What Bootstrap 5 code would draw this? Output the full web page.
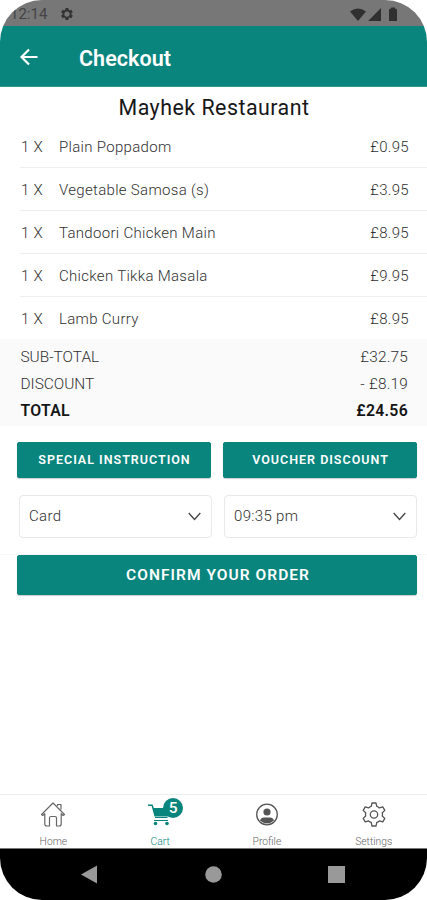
<!DOCTYPE html>
<html lang="en">
<head>
<meta charset="utf-8">
<meta name="viewport" content="width=device-width, initial-scale=1">
<title>Checkout</title>
<link href="https://cdn.jsdelivr.net/npm/bootstrap@5.3.0/dist/css/bootstrap.min.css" rel="stylesheet">
<style>
:root{--teal:#0a857e}
body{font-family:Roboto,"Noto Sans",sans-serif;background:#fff;color:#303030;font-size:15px;line-height:20px}
.phone{width:427px;height:900px;border-radius:42px;background:#fff}
.status{height:26px;background:#777;color:#444;font-size:15px;padding:2px 29px 0 10px}
.status .gear{margin:0 0 1px 13px}
.appbar{height:61px;background:var(--teal);padding:2px 0 0 20px;border-bottom:1px solid #2f9791}
.appbar h1{font-size:21.5px;font-weight:600;margin:3px 0 0 41px;letter-spacing:.05px}
.shop{font-size:21.4px;line-height:28px;padding:7px 0 0 1px;height:38px;color:#171717;letter-spacing:.48px}
.dish{height:43px;margin-left:20px;padding:1px 18px 0 1px;border-bottom:1px solid #eee;font-weight:300;letter-spacing:.31px}
.dish:last-child{height:42px;padding-top:2px}
.qty{width:38px}
.sums{background:#fafafa;height:87px;padding:4px 19px 0 20.5px;font-weight:300;font-size:15.400px}
.sums>div{height:27px}
.sums .price{letter-spacing:.2px}
.sums .grand{font-weight:600;color:#151515;letter-spacing:.3px;font-size:15.800px}
.acts{padding:16px 10px 0 17px}
.tbtn{--bs-btn-color:#fff;--bs-btn-bg:var(--teal);--bs-btn-border-color:var(--teal);--bs-btn-hover-bg:#08736d;--bs-btn-hover-color:#fff;height:36px;padding:1px 0 0 1px;font-size:12.5px;font-weight:600;border-radius:2px;letter-spacing:1px;box-shadow:0 1px 1px #0003}
.tbtn.big{height:40px;padding:2px 0 0 2px;font-size:15.5px;letter-spacing:1.05px}
.picks{padding:17px 10px 0 19px;height:76px}
.pick{height:43px;border:1px solid #e9e9e9;border-radius:4px;padding:0 10px 1px 9px;letter-spacing:.32px;font-weight:300}
.confirm{border-top:1px solid #f7f7f7;padding:0 10px 0 17px}
.tabs{height:54px;border-top:1px solid #ececec;font-size:10.3px;line-height:12px;font-weight:300;color:#666}
.tabs svg{display:block;margin:5px auto 8px}
.tabs .on{color:var(--teal)}
.cart{width:24px}
.sys{height:52px;background:#000;border-top:1px solid #777;padding:0 82px 0 81px}
.count{position:absolute;left:15px;top:-2px;width:20px;height:20px;background:var(--teal);color:#fff;font-size:15.5px;line-height:20px;font-weight:500}
</style>
</head>
<body>
<main class="phone d-flex flex-column overflow-hidden">
  <div class="status d-flex align-items-center">
    <span>12:14</span>
    <svg class="gear" width="14" height="14" viewBox="0 0 24 24" fill="#333"><path fill-rule="evenodd" d="M19.4 13a8 8 0 0 0 0-2l2.200-1.700a.5.5 0 0 0 .1-.6l-2.100-3.600a.5.5 0 0 0-.6-.2l-2.500 1a8 8 0 0 0-1.700-1L14.400 2.200a.5.5 0 0 0-.5-.4h-4a.5.5 0 0 0-.5.4L9 4.900a8 8 0 0 0-1.700 1l-2.500-1a.5.5 0 0 0-.6.2L2.100 8.700a.5.500 0 0 0 .1.600L4.400 11a8 8 0 0 0 0 2l-2.200 1.700a.5.500 0 0 0-.1.600l2.100 3.600q.2.300.6.200l2.500-1a8 8 0 0 0 1.700 1l.4 2.700q.1.400.5.400h4q.4 0 .5-.4l.4-2.700a8 8 0 0 0 1.700-1l2.500 1q.4.100.6-.2l2.100-3.600q.2-.3-.1-.6zM12 16.500a4.500 4.500 0 1 1 0-9 4.500 4.500 0 0 1 0 9z"/></svg>
    <svg class="ms-auto" width="49" height="15" viewBox="0 0 49 15" fill="#303030"><path d="M1 4.500Q9 -1.500 17 4.500L9 14zM19 14 32 1v13zM40 3q0-1.500 2-1.500V.5h4v1q2 0 2 1.500v11h-8z"/></svg>
  </div>
  <header class="appbar d-flex align-items-center text-white">
    <svg width="18" height="18" viewBox="0 0 18 18" fill="none" stroke="#fff" stroke-width="2.200"><path d="M17.500 9H2M9 1.500 1.500 9 9 16.500"/></svg>
    <h1>Checkout</h1>
  </header>
  <div class="shop text-center">Mayhek Restaurant</div>
  <section>
    <div class="dish d-flex align-items-center"><span class="qty">1 X</span><span>Plain Poppadom</span><span class="ms-auto">£0.95</span></div>
    <div class="dish d-flex align-items-center"><span class="qty">1 X</span><span>Vegetable Samosa (s)</span><span class="ms-auto">£3.95</span></div>
    <div class="dish d-flex align-items-center"><span class="qty">1 X</span><span>Tandoori Chicken Main</span><span class="ms-auto">£8.95</span></div>
    <div class="dish d-flex align-items-center"><span class="qty">1 X</span><span>Chicken Tikka Masala</span><span class="ms-auto">£9.95</span></div>
    <div class="dish d-flex align-items-center border-0"><span class="qty">1 X</span><span>Lamb Curry</span><span class="ms-auto">£8.95</span></div>
  </section>
  <section class="sums">
    <div class="d-flex justify-content-between align-items-center"><span>SUB-TOTAL</span><span class="price">£32.75</span></div>
    <div class="d-flex justify-content-between align-items-center"><span>DISCOUNT</span><span class="price">- £8.19</span></div>
    <div class="grand d-flex justify-content-between align-items-center"><span>TOTAL</span><span>£24.56</span></div>
  </section>
  <div class="acts d-flex gap-2">
    <button class="btn tbtn flex-fill w-50 me-1">SPECIAL INSTRUCTION</button>
    <button class="btn tbtn flex-fill w-50">VOUCHER DISCOUNT</button>
  </div>
  <div class="picks d-flex">
    <div class="pick d-flex align-items-center justify-content-between w-50 me-2"><span>Card</span><svg width="13" height="9" viewBox="0 0 13 9" fill="none" stroke="#444" stroke-width="1.300"><path d="M.7 1 6.500 7.500 12.300 1"/></svg></div>
    <div class="pick d-flex align-items-center justify-content-between w-50 ms-1"><span>09:35 pm</span><svg width="13" height="9" viewBox="0 0 13 9" fill="none" stroke="#444" stroke-width="1.300"><path d="M.7 1 6.500 7.500 12.300 1"/></svg></div>
  </div>
  <div class="confirm"><button class="btn tbtn big w-100">CONFIRM YOUR ORDER</button></div>
  <nav class="tabs d-flex mt-auto text-center">
    <div class="col-3"><svg width="26" height="28" viewBox="0 0 26 28" fill="none" stroke="#666" stroke-width="1.200" stroke-linejoin="round"><path d="M1.500 14.500 13 3l11.500 11.500-1.300 1-2-1.900V24q0 2-2 2h-2.700v-8q0-1.500-1.500-1.500h-4Q9.500 16.500 9.500 18v8H6.800q-2 0-2-2V13.600l-2 1.900zM17.500 6V4.500H21v5"/></svg>Home</div>
    <div class="col-3 on"><div class="cart position-relative mx-auto"><svg width="24" height="28" viewBox="0 0 24 28" fill="#0a857e"><path d="M0 4.500h4.600L5.800 8H22l-2 8.500H6.500L3.600 6H0z"/><path d="M7 17.500h12.500M6 20.500h14" stroke="#0a857e" stroke-width="1.200"/><circle cx="7.500" cy="23.500" r="1.800"/><circle cx="19" cy="23.500" r="1.800"/></svg><span class="count rounded-circle">5</span></div>Cart</div>
    <div class="col-3"><svg width="24" height="28" viewBox="0 0 24 28"><circle cx="12" cy="14.500" r="10.300" fill="none" stroke="#555" stroke-width="1.300"/><circle cx="12" cy="12" r="3.600" fill="#555"/><path d="M5 20.500q1-3 4-3h6q3 0 4 3-7 6-14 0z" fill="#555"/></svg>Profile</div>
    <div class="col-3"><svg width="26" height="28" viewBox="0 0 26 28" fill="none" stroke="#555" stroke-width="1.300" stroke-linejoin="round"><path d="M11 3h4l.8 3.400q1.500.5 2.600 1.500l3.400-1 2 3.500-2.500 2.400q.4 1.700 0 3.200l2.500 2.400-2 3.500-3.400-1q-1.200 1-2.600 1.500L15 26h-4l-.8-3.600q-1.500-.5-2.600-1.500l-3.400 1-2-3.500L4.700 16q-.4-1.500 0-3.200L2.200 10.400l2-3.500 3.400 1q1.100-1 2.600-1.500z"/><circle cx="13" cy="14.500" r="3.700"/></svg>Settings</div>
  </nav>
  <div class="sys d-flex justify-content-between align-items-center">
    <svg width="17" height="19" viewBox="0 0 17 19" fill="#999"><path d="M0 9.500 16 .5v18z"/></svg>
    <svg width="17" height="17" viewBox="0 0 17 17" fill="#999"><circle cx="8.500" cy="8.500" r="8.300"/></svg>
    <svg width="17" height="17" viewBox="0 0 17 17" fill="#999"><path d="M0 0h17v17H0z"/></svg>
  </div>
</main>
<script src="https://cdn.jsdelivr.net/npm/bootstrap@5.3.0/dist/js/bootstrap.bundle.min.js"></script>
</body>
</html>
